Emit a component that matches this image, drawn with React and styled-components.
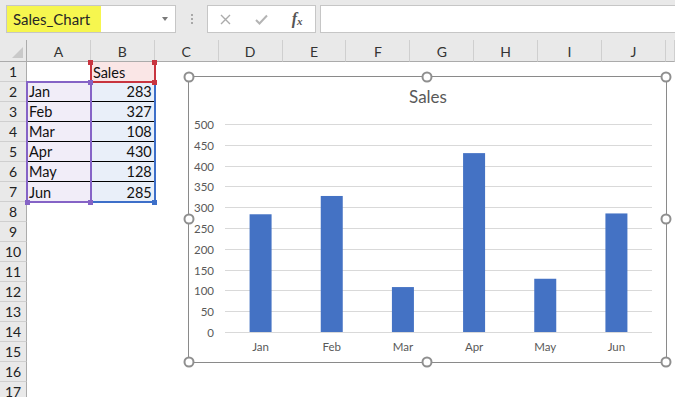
import React from 'react';
import styled, { createGlobalStyle } from 'styled-components';

const GlobalStyle = createGlobalStyle`
  html, body {
    margin: 0;
    padding: 0;
    background: #fff;
  }
  body {
    font-family: Lato, "Liberation Sans", sans-serif;
  }
`;

const Window = styled.div`
  position: relative;
  width: 675px;
  height: 397px;
  overflow: hidden;
  background: #fff;
`;

/* ---------- formula bar ---------- */

const Toolbar = styled.div`
  height: 40px;
  box-sizing: border-box;
  padding: 5px 0 7px 6px;
  display: flex;
  background: #e9e9e9;
`;

const NameBox = styled.div`
  width: 170px;
  box-sizing: border-box;
  display: flex;
  align-items: center;
  background: #fff;
  border: 1px solid #c6c6c6;
`;

const NameText = styled.div`
  width: 94px;
  height: 100%;
  box-sizing: border-box;
  padding-left: 6px;
  display: flex;
  align-items: center;
  background: #f6f64f;
  font-size: 15px;
  color: #262626;
`;

const DropArrow = styled.span`
  margin-left: auto;
  margin-right: 7px;
  border-left: 3.5px solid transparent;
  border-right: 3.5px solid transparent;
  border-top: 4px solid #7a7a7a;
`;

const Grip = styled.div`
  width: 31px;
  display: flex;
  flex-direction: column;
  align-items: center;
  justify-content: center;
  gap: 2px;

  span {
    width: 2px;
    height: 2px;
    background: #a8a8a8;
  }
`;

const FnBox = styled.div`
  width: 109px;
  box-sizing: border-box;
  display: flex;
  align-items: center;
  background: #fff;
  border: 1px solid #c6c6c6;
`;

const FnSlot = styled.div`
  width: 36px;
  display: flex;
  align-items: center;
  justify-content: center;
`;

const Fx = styled.span`
  font-family: "Liberation Serif", serif;
  font-style: italic;
  font-weight: bold;
  font-size: 16px;
  color: #555;

  sub {
    font-size: 11px;
    vertical-align: -1px;
  }
`;

const FormulaInput = styled.div`
  flex: 1;
  margin-left: 4px;
  background: #fff;
  border: 1px solid #c6c6c6;
  border-right: none;
`;

/* ---------- sheet ---------- */

const Sheet = styled.div`
  display: grid;
  grid-template-columns: 27px repeat(10, 63.9px) 1fr;
  grid-template-rows: 22px repeat(17, 20px);
  background: #fff;
`;

const Corner = styled.div`
  grid-row: 1;
  grid-column: 1;
  position: relative;
  background: #e9e9e9;
  border-bottom: 1px solid #ababab;
  border-right: 1px solid #ababab;
  box-sizing: border-box;

  &::after {
    content: '';
    position: absolute;
    right: 3px;
    bottom: 3px;
    border-left: 11px solid transparent;
    border-bottom: 11px solid #c9c9c9;
  }
`;

const ColHead = styled.div`
  grid-row: 1;
  grid-column: ${({ $col }) => $col};
  display: flex;
  align-items: center;
  justify-content: center;
  padding-top: 2px;
  box-sizing: border-box;
  background: #e9e9e9;
  border-bottom: 1px solid #ababab;
  border-right: 1px solid #cfcfcf;
  font-size: 14px;
  color: #333;
`;

const RowHead = styled.div`
  grid-column: 1;
  grid-row: ${({ $row }) => $row};
  display: flex;
  align-items: center;
  justify-content: center;
  box-sizing: border-box;
  background: #e9e9e9;
  border-bottom: 1px solid #cfcfcf;
  border-right: 1px solid #ababab;
  font-size: 14px;
  color: #222;
`;

const Cell = styled.div`
  grid-row: ${({ $row }) => $row};
  grid-column: ${({ $col }) => $col};
  display: flex;
  align-items: center;
  justify-content: ${({ $align }) => ($align === 'right' ? 'flex-end' : 'flex-start')};
  padding: 0 3px 0 2px;
  box-sizing: border-box;
  background: ${({ $fill }) => $fill || '#fff'};
  border-bottom: ${({ $rule }) => ($rule ? '1px solid #000' : 'none')};
  font-size: 14.5px;
  color: #111;
`;

const Outline = styled.div`
  grid-row: ${({ $row }) => $row};
  grid-column: ${({ $col }) => $col};
  position: relative;
  z-index: 2;
  margin: -1px;
  border: 2px solid ${({ $color }) => $color};
  border-top-color: ${({ $open, $color }) => ($open ? 'transparent' : $color)};
  pointer-events: none;
`;

const Knob = styled.span`
  position: absolute;
  ${({ $h }) => $h}: -3.5px;
  ${({ $v }) => $v}: -3.5px;
  width: 5px;
  height: 5px;
  background: ${({ $color }) => $color};
`;

/* ---------- chart ---------- */

const ChartFrame = styled.div`
  position: absolute;
  left: 188px;
  top: 76px;
  z-index: 5;
  width: 479px;
  height: 287px;
  box-sizing: border-box;
  background: #fff;
  border: 1px solid #8a8a8a;
`;

const ChartSvg = styled.svg`
  display: block;
  font-family: Lato, "Liberation Sans", sans-serif;
  fill: #595959;
`;

const Handle = styled.span`
  position: absolute;
  left: ${({ $x }) => $x};
  top: ${({ $y }) => $y};
  width: 11px;
  height: 11px;
  box-sizing: border-box;
  margin: -0.5px 0 0 -0.5px;
  transform: translate(-50%, -50%);
  border-radius: 50%;
  border: 2px solid #8f8f8f;
  background: #fff;
`;

const columns = ['A', 'B', 'C', 'D', 'E', 'F', 'G', 'H', 'I', 'J', ''];

const sales = [
  ['Jan', 283],
  ['Feb', 327],
  ['Mar', 108],
  ['Apr', 430],
  ['May', 128],
  ['Jun', 285],
];

const PURPLE = '#8563c6';
const BLUE = '#3d6fc9';
const RED = '#c8343f';

const handles = [
  ['0%', '0%'], ['50%', '0%'], ['100%', '0%'],
  ['0%', '50%'], ['100%', '50%'],
  ['0%', '100%'], ['50%', '100%'], ['100%', '100%'],
];

const SalesChart = () => {
  const x0 = 36;
  const x1 = 463;
  const y0 = 255;
  const k = 0.416;
  const step = (x1 - x0) / sales.length;
  const ticks = [0, 50, 100, 150, 200, 250, 300, 350, 400, 450, 500];

  return (
    <ChartFrame>
      <ChartSvg width="477" height="285">
        <text x="239" y="26" textAnchor="middle" fontSize="17">Sales</text>
        {ticks.map((t) => {
          const y = Math.round(y0 - t * k) + 0.5;
          return (
            <g key={t}>
              <line x1={x0} x2={x1} y1={y} y2={y} stroke="#d9d9d9" strokeWidth="1" />
              <text x="25" y={y + 4} textAnchor="end" fontSize="11.5">{t}</text>
            </g>
          );
        })}
        {sales.map(([m, v], i) => {
          const cx = x0 + step * (i + 0.5);
          const top = y0 - v * k;
          return (
            <g key={m}>
              <rect x={cx - 11} y={top} width="22" height={y0 - top} fill="#4472c4" />
              <text x={cx} y="274" textAnchor="middle" fontSize="11.5">{m}</text>
            </g>
          );
        })}
      </ChartSvg>
      {handles.map(([x, y]) => (
        <Handle key={x + y} $x={x} $y={y} />
      ))}
    </ChartFrame>
  );
};

const App = () => {
  return (
    <Window>
      <GlobalStyle />
      <Toolbar>
        <NameBox>
          <NameText>Sales_Chart</NameText>
          <DropArrow />
        </NameBox>
        <Grip>
          <span />
          <span />
          <span />
        </Grip>
        <FnBox>
          <FnSlot>
            <svg width="11" height="11" viewBox="0 0 11 11">
              <path d="M1 1 L10 10 M10 1 L1 10" stroke="#ababab" strokeWidth="1.4" fill="none" />
            </svg>
          </FnSlot>
          <FnSlot>
            <svg width="13" height="11" viewBox="0 0 13 11">
              <path d="M1 6 L4.5 9.5 L12 1.5" stroke="#b4b4b4" strokeWidth="2" fill="none" />
            </svg>
          </FnSlot>
          <FnSlot>
            <Fx>f<sub>x</sub></Fx>
          </FnSlot>
        </FnBox>
        <FormulaInput />
      </Toolbar>

      <Sheet>
        <Corner />
        {columns.map((c, i) => (
          <ColHead key={i} $col={i + 2}>{c}</ColHead>
        ))}
        {Array.from({ length: 17 }, (_, i) => (
          <RowHead key={i} $row={i + 2}>{i + 1}</RowHead>
        ))}

        <Cell $row={2} $col={2} />
        <Cell $row={2} $col={3} $fill="#fae6e6">Sales</Cell>
        {sales.map(([m, v], i) => (
          <React.Fragment key={m}>
            <Cell $row={i + 3} $col={2} $fill="#f1edf8" $rule={i < 5}>{m}</Cell>
            <Cell $row={i + 3} $col={3} $fill="#e9eff9" $rule={i < 5} $align="right">{v}</Cell>
          </React.Fragment>
        ))}

        <Outline $row="3 / 9" $col={3} $color={BLUE}>
          <Knob $h="right" $v="bottom" $color={BLUE} />
        </Outline>
        <Outline $row={2} $col={3} $color={RED} $open>
          <Knob $h="left" $v="top" $color={RED} />
          <Knob $h="right" $v="top" $color={RED} />
          <Knob $h="right" $v="bottom" $color={RED} />
        </Outline>
        <Outline $row="3 / 9" $col={2} $color={PURPLE}>
          <Knob $h="right" $v="top" $color={PURPLE} />
          <Knob $h="left" $v="bottom" $color={PURPLE} />
          <Knob $h="right" $v="bottom" $color={PURPLE} />
        </Outline>
      </Sheet>

      <SalesChart />
    </Window>
  );
};

export default App;
